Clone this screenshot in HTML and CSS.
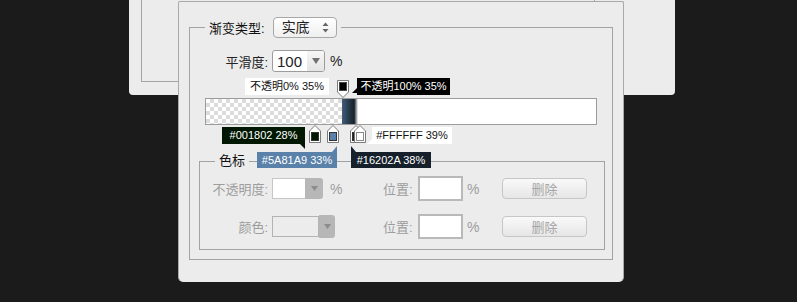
FILE: index.html
```html
<!DOCTYPE html>
<html lang="zh-CN">
<head>
    <meta charset="UTF-8">
    <title>渐变编辑器</title>
    <link rel="stylesheet" href="styles.css">
</head>
<body>
<div class="desk">
    <div class="back-panel"><div class="back-frame"></div></div>

    <div class="dialog">
        <fieldset class="group">
            <legend class="group-title">
                <span class="title-label">渐变类型:</span>
                <span class="select">实底
                    <svg class="spin" width="7" height="11" viewBox="0 0 7 11">
                        <path d="M3.5 0.5 L6.5 4 H0.5 Z" fill="#666"/>
                        <path d="M0.5 7 H6.5 L3.5 10.5 Z" fill="#666"/>
                    </svg>
                </span>
            </legend>

            <div class="smooth-row">
                <span class="row-label">平滑度:</span>
                <span class="combo">100
                    <span class="combo-drop">
                        <svg width="8" height="6" viewBox="0 0 8 6"><path d="M0 0 H8 L4 6 Z" fill="#707070"/></svg>
                    </span>
                </span>
                <span class="unit">%</span>
            </div>

            <div class="editor">
                <!-- opacity stop -->
                <div class="tip tip-light tip-op0">不透明0% 35%</div>
                <svg class="stop stop-top" width="12" height="18" viewBox="0 0 12 18">
                    <path d="M0.5 0.5 H11.5 V12 L6 17.5 L0.5 12 Z" fill="#fff" stroke="#7a7a7a"/>
                    <rect x="2.5" y="2.5" width="7" height="8" fill="#000" stroke="#444"/>
                </svg>
                <div class="tip tip-op100">不透明100% 35%</div>

                <div class="bar"></div>

                <!-- colour stops -->
                <svg class="stop stop-c1" width="12" height="18" viewBox="0 0 12 18">
                    <path d="M6 0.5 L11.5 6 V17.5 H0.5 V6 Z" fill="#fff" stroke="#7a7a7a"/>
                    <rect x="2.5" y="7.5" width="7" height="8" fill="#001802" stroke="#333"/>
                </svg>
                <svg class="stop stop-c2" width="12" height="18" viewBox="0 0 12 18">
                    <path d="M6 0.5 L11.5 6 V17.5 H0.5 V6 Z" fill="#fff" stroke="#7a7a7a"/>
                    <rect x="2.5" y="7.5" width="7" height="8" fill="#5a81a9" stroke="#333"/>
                </svg>
                <svg class="stop stop-c3" width="12" height="18" viewBox="0 0 12 18">
                    <path d="M6 0.5 L11.5 6 V17.5 H0.5 V6 Z" fill="#fff" stroke="#7a7a7a"/>
                    <rect x="2.5" y="7.5" width="7" height="8" fill="#16202a" stroke="#333"/>
                </svg>
                <svg class="stop stop-c4" width="12" height="18" viewBox="0 0 12 18">
                    <path d="M6 0.5 L11.5 6 V17.5 H0.5 V6 Z" fill="#fff" stroke="#7a7a7a"/>
                    <rect x="2.5" y="7.5" width="7" height="8" fill="#fff" stroke="#8a8a8a"/>
                </svg>

                <div class="tip tip-c1">#001802 28%</div>
                <div class="tip tip-light tip-c4">#FFFFFF 39%</div>
                <div class="tip tip-c2">#5A81A9 33%</div>
                <div class="tip tip-c3">#16202A 38%</div>
            </div>

            <fieldset class="stops-group">
                <legend class="stops-title">色标</legend>

                <div class="stop-row">
                    <span class="field-label">不透明度:</span>
                    <span class="field-cell">
                        <span class="mini-combo">
                            <span class="mini-box"></span>
                            <span class="mini-drop"><svg width="7" height="5" viewBox="0 0 7 5"><path d="M0 0 H7 L3.5 5 Z" fill="#8c8c8c"/></svg></span>
                        </span>
                        <span class="field-unit">%</span>
                    </span>
                    <span class="pos-label">位置:</span>
                    <span class="pos-input"></span>
                    <span class="pos-unit">%</span>
                    <button class="btn">删除</button>
                </div>

                <div class="stop-row second">
                    <span class="field-label">颜色:</span>
                    <span class="field-cell">
                        <span class="swatch"></span>
                        <span class="swatch-drop"><svg width="7" height="5" viewBox="0 0 7 5"><path d="M0 0 H7 L3.5 5 Z" fill="#8c8c8c"/></svg></span>
                    </span>
                    <span class="pos-label">位置:</span>
                    <span class="pos-input"></span>
                    <span class="pos-unit">%</span>
                    <button class="btn">删除</button>
                </div>
            </fieldset>
        </fieldset>
    </div>
</div>
</body>
</html>
```

FILE: styles.css
```css
body {
    margin: 0;
    background-color: #1b1b1b;
    font-family: "Liberation Sans", "Noto Sans CJK SC", sans-serif;
    color: #222;
}

.desk {
    position: relative;
    width: 797px;
    height: 302px;
    overflow: hidden;
}

/* the window behind */
.back-panel {
    position: absolute;
    left: 129px;
    top: -10px;
    width: 546px;
    height: 105px;
    background-color: #ececec;
    border-radius: 0 0 4px 4px;
}

.back-frame {
    position: absolute;
    left: 12px;
    right: 80px;
    top: 0;
    bottom: 13px;
    border: 1px solid #a4a4a4;
}

/* gradient dialog */
.dialog {
    position: absolute;
    left: 178px;
    top: 1px;
    width: 424px;
    padding: 15px 10px 22px;
    background-color: #ececec;
    border: 1px solid #a9a9a9;
    border-bottom: none;
    border-radius: 2px 2px 5px 5px;
}

.group {
    margin: 0;
    padding: 0;
    min-width: 0;
    border: 1px solid #a3a3a3;
}

.group-title {
    display: flex;
    align-items: center;
    gap: 8px;
    height: 21px;
    margin-left: 15px;
    padding: 0 4px;
    font-size: 13px;
}

.title-label {
    font-size: 13px;
    color: #111;
}

.select {
    position: relative;
    display: flex;
    align-items: center;
    box-sizing: border-box;
    width: 64px;
    height: 21px;
    padding-left: 8px;
    border: 1px solid #a8a8a8;
    border-radius: 4px;
    background: linear-gradient(#ffffff, #efefef);
    font-size: 14px;
    line-height: 19px;
}

.spin {
    position: absolute;
    right: 7px;
    top: 4px;
}

.smooth-row {
    display: flex;
    align-items: center;
    height: 22px;
    margin-top: 12px;
}

.row-label {
    width: 78px;
    margin-right: 4px;
    text-align: right;
    font-size: 13px;
}

.combo {
    display: flex;
    align-items: center;
    box-sizing: border-box;
    width: 53px;
    height: 22px;
    padding-left: 4px;
    border: 1px solid #9c9c9c;
    border-radius: 3px;
    background-color: #fff;
    font-size: 15px;
}

.combo-drop {
    display: flex;
    align-items: center;
    justify-content: center;
    width: 17px;
    height: 100%;
    margin-left: auto;
    background: linear-gradient(#f6f6f6, #e4e4e4);
    border-radius: 0 2px 2px 0;
}

.unit {
    margin-left: 5px;
    font-size: 14px;
}

/* gradient preview + stops */
.editor {
    position: relative;
    box-sizing: border-box;
    width: 392px;
    height: 75px;
    margin: 5px 0 0 15px;
    padding-top: 21px;
}

.bar {
    box-sizing: border-box;
    height: 27px;
    border: 1px solid #9c9c9c;
    background-color: #fff;
    background-image:
        linear-gradient(to right, transparent 35%, #3f5a76 35%, #16202a 38%, #ffffff 39%, #ffffff 100%),
        linear-gradient(45deg, #dcdcdc 25%, transparent 25%, transparent 75%, #dcdcdc 75%),
        linear-gradient(45deg, #dcdcdc 25%, transparent 25%, transparent 75%, #dcdcdc 75%);
    background-size: 100% 100%, 8px 8px, 8px 8px;
    background-position: 0 0, 0 0, 4px 4px;
}

.stop {
    position: absolute;
    display: block;
}

.stop-top { left: 132px; top: 3px; }
.stop-c1 { left: 104px; top: 48px; }
.stop-c2 { left: 122px; top: 48px; }
.stop-c3 { left: 145px; top: 48px; }
.stop-c4 { left: 149px; top: 48px; }

.tip {
    position: absolute;
    box-sizing: border-box;
    height: 17px;
    line-height: 17px;
    font-size: 11px;
    text-align: center;
    white-space: nowrap;
    color: #fff;
}

.tip::after {
    content: "";
    position: absolute;
    width: 0;
    height: 0;
}

.tip-light {
    color: #111;
    background-color: #fff;
}

.tip-op0 {
    left: 40px;
    top: 1px;
    width: 84px;
}

.tip-op100 {
    left: 152px;
    top: 1px;
    width: 93px;
    background-color: #000;
}

.tip-op100::after {
    right: 100%;
    bottom: 2px;
    border-right: 5px solid #000;
    border-top: 5px solid transparent;
}

.tip-c1 {
    left: 17px;
    top: 50px;
    width: 83px;
    background-color: #001802;
}

.tip-c1::after {
    right: 0;
    top: 100%;
    border-right: 5px solid #001802;
    border-bottom: 5px solid transparent;
}

.tip-c4 {
    left: 167px;
    top: 50px;
    width: 80px;
}

.tip-c4::after {
    right: 100%;
    bottom: 0;
    border-right: 5px solid #fff;
    border-top: 5px solid transparent;
}

.tip-c2 {
    left: 52px;
    top: 75px;
    width: 80px;
    height: 16px;
    line-height: 16px;
    background-color: #5a81a9;
}

.tip-c2::after {
    right: 0;
    bottom: 100%;
    border-right: 5px solid #5a81a9;
    border-top: 6px solid transparent;
}

.tip-c3 {
    left: 146px;
    top: 75px;
    width: 80px;
    height: 16px;
    line-height: 16px;
    background-color: #16202a;
}

.tip-c3::after {
    left: 0;
    bottom: 100%;
    border-left: 5px solid #16202a;
    border-top: 6px solid transparent;
}

/* colour stop group */
.stops-group {
    margin: 0 7px 9px 9px;
    padding: 0 0 10px;
    min-width: 0;
    border: 1px solid #a3a3a3;
}

.stops-title {
    margin-left: 15px;
    padding: 0 4px;
    font-size: 13px;
    line-height: 18px;
    color: #111;
}

.stop-row {
    display: flex;
    align-items: center;
    height: 25px;
    margin-top: 6px;
    font-size: 13px;
    color: #9d9d9d;
}

.stop-row.second {
    margin-top: 13px;
}

.field-label {
    width: 68px;
    margin-right: 4px;
    text-align: right;
}

.field-cell {
    display: flex;
    align-items: center;
    width: 111px;
}

.mini-combo {
    display: flex;
    height: 21px;
}

.mini-box {
    box-sizing: border-box;
    width: 33px;
    height: 21px;
    border: 1px solid #c6c6c6;
    border-right: none;
    background-color: #fff;
}

.mini-drop {
    display: flex;
    align-items: center;
    justify-content: center;
    width: 18px;
    height: 21px;
    background-color: #b7b7b7;
    border-radius: 0 3px 3px 0;
}

.field-unit {
    margin-left: 7px;
    font-size: 14px;
}

.swatch {
    box-sizing: border-box;
    width: 47px;
    height: 21px;
    border: 1px solid #b3b3b3;
    background-color: #ececec;
}

.swatch-drop {
    display: flex;
    align-items: center;
    justify-content: center;
    width: 16px;
    height: 23px;
    background-color: #b7b7b7;
    border-radius: 0 3px 3px 0;
}

.pos-label {
    width: 35px;
}

.pos-input {
    box-sizing: border-box;
    width: 45px;
    height: 25px;
    border: 2px solid #b9b9b9;
    background-color: #fff;
}

.pos-unit {
    width: 35px;
    padding-left: 4px;
    font-size: 14px;
}

.btn {
    box-sizing: border-box;
    width: 85px;
    height: 21px;
    padding: 0;
    border: 1px solid #c6c6c6;
    border-radius: 4px;
    background: linear-gradient(#f9f9f9, #e6e6e6);
    font-family: "Noto Sans CJK SC", sans-serif;
    font-size: 13px;
    line-height: 19px;
    color: #a6a6a6;
}
```
